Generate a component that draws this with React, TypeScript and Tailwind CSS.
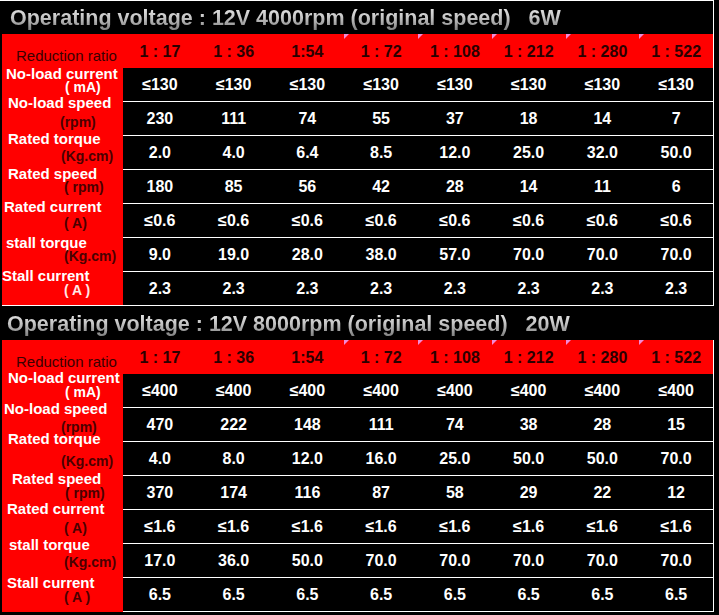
type Row = {
  label: string;
  labelCls: string;
  unit: string;
  unitCls: string;
  values: string[];
};

type Section = {
  title: string;
  first: boolean;
  rows: Row[];
};

const ratios = ["1 : 17", "1 : 36", "1:54", "1 : 72", "1 : 108", "1 : 212", "1 : 280", "1 : 522"];

const rep = (v: string) => Array.from({ length: 8 }, () => v);

const sections: Section[] = [
  {
    title: "Operating voltage : 12V 4000rpm (original speed)   6W",
    first: true,
    rows: [
      {
        label: "No-load current",
        labelCls: "ml-[4px] -mt-[2px]",
        unit: "( mA)",
        unitCls: "ml-[63px] -mt-[3px] text-white",
        values: rep("≤130"),
      },
      {
        label: "No-load speed",
        labelCls: "ml-[6px] -mt-[7px]",
        unit: "(rpm)",
        unitCls: "ml-[58px] mt-[3px] text-[#4a0000]",
        values: ["230", "111", "74", "55", "37", "18", "14", "7"],
      },
      {
        label: "Rated torque",
        labelCls: "ml-[6px] -mt-[5px]",
        unit: "(Kg.cm)",
        unitCls: "ml-[59px] mt-[1px] text-[#4a0000]",
        values: ["2.0", "4.0", "6.4", "8.5", "12.0", "25.0", "32.0", "50.0"],
      },
      {
        label: "Rated speed",
        labelCls: "ml-[6px] -mt-[4px]",
        unit: "( rpm)",
        unitCls: "ml-[62px] -mt-[3px] text-[#4a0000]",
        values: ["180", "85", "56", "42", "28", "14", "11", "6"],
      },
      {
        label: "Rated current",
        labelCls: "ml-[2px] -mt-[5px]",
        unit: "( A)",
        unitCls: "ml-[62px] mt-0 text-[#4a0000]",
        values: rep("≤0.6"),
      },
      {
        label: "stall torque",
        labelCls: "ml-[4px] -mt-[3px]",
        unit: "(Kg.cm)",
        unitCls: "ml-[62px] -mt-[3px] text-[#4a0000]",
        values: ["9.0", "19.0", "28.0", "38.0", "57.0", "70.0", "70.0", "70.0"],
      },
      {
        label: "Stall current",
        labelCls: "ml-0 -mt-[4px]",
        unit: "( A )",
        unitCls: "ml-[62px] -mt-[2px] text-[#ffe8e8]",
        values: rep("2.3"),
      },
    ],
  },
  {
    title: "Operating voltage : 12V 8000rpm (original speed)   20W",
    first: false,
    rows: [
      {
        label: "No-load current",
        labelCls: "ml-[6px] -mt-[4px]",
        unit: "( mA)",
        unitCls: "ml-[63px] -mt-[2px] text-white",
        values: rep("≤400"),
      },
      {
        label: "No-load speed",
        labelCls: "ml-[2px] -mt-[7px]",
        unit: "(rpm)",
        unitCls: "ml-[59px] mt-[2px] text-[#4a0000]",
        values: ["470", "222", "148", "111", "74", "38", "28", "15"],
      },
      {
        label: "Rated torque",
        labelCls: "ml-[6px] -mt-[11px]",
        unit: "(Kg.cm)",
        unitCls: "ml-[59px] mt-[6px] text-[#4a0000]",
        values: ["4.0", "8.0", "12.0", "16.0", "25.0", "50.0", "50.0", "70.0"],
      },
      {
        label: "Rated speed",
        labelCls: "ml-[10px] -mt-[5px]",
        unit: "( rpm)",
        unitCls: "ml-[63px] -mt-[2px] text-[#4a0000]",
        values: ["370", "174", "116", "87", "58", "29", "22", "12"],
      },
      {
        label: "Rated current",
        labelCls: "ml-[5px] -mt-[9px]",
        unit: "( A)",
        unitCls: "ml-[62px] mt-[3px] text-[#4a0000]",
        values: rep("≤1.6"),
      },
      {
        label: "stall torque",
        labelCls: "ml-[7px] -mt-[7px]",
        unit: "(Kg.cm)",
        unitCls: "ml-[62px] mt-[1px] text-[#4a0000]",
        values: ["17.0", "36.0", "50.0", "70.0", "70.0", "70.0", "70.0", "70.0"],
      },
      {
        label: "Stall current",
        labelCls: "ml-[5px] -mt-[3px]",
        unit: "( A )",
        unitCls: "ml-[62px] -mt-[2px] text-[#4a0000]",
        values: rep("6.5"),
      },
    ],
  },
];

function SpecTable({ section }: { section: Section }) {
  return (
    <div className="flex flex-col">
      <div
        className={
          section.first
            ? "flex h-[34px] items-center border-t border-r border-white pl-[10px]"
            : "flex h-[34px] items-center pl-[7px]"
        }
      >
        <span className="whitespace-pre bg-gradient-to-b from-[#f2f2f2] via-[#c4c4c4] to-[#7c7c7c] bg-clip-text pt-[1px] text-[21.5px] font-bold leading-[26px] text-transparent">
          {section.title}
        </span>
      </div>

      <div className="grid h-[34px] grid-cols-[121px_repeat(8,1fr)] border-r border-white pl-[2px]">
        <div className="bg-[#ff0000] pl-[14px] pt-[14px] text-[15px] leading-[16px] text-[#3a0000]">
          Reduction ratio
        </div>
        {ratios.map((r, i) => (
          <div
            key={r}
            className="relative flex items-center justify-center bg-[#ff0000] pt-[2px] text-[16px] font-bold text-[#2a0000]"
          >
            {i >= 3 && (
              <span className="absolute left-0 top-0 h-0 w-0 border-t-[5px] border-r-[5px] border-t-[#f28ad6] border-r-transparent" />
            )}
            {r}
          </div>
        ))}
      </div>

      {section.rows.map((row, ri) => (
        <div
          key={row.label + ri}
          className="grid h-[34px] grid-cols-[121px_repeat(8,1fr)] border-r border-white pl-[2px]"
        >
          <div
            className={
              section.first && ri === section.rows.length - 1
                ? "flex flex-col border-b border-white bg-[#ff0000] font-bold"
                : "flex flex-col bg-[#ff0000] font-bold"
            }
          >
            <span className={`whitespace-pre text-[15px] leading-[16px] text-white ${row.labelCls}`}>
              {row.label}
            </span>
            <span className={`whitespace-pre text-[14px] leading-[16px] ${row.unitCls}`}>
              {row.unit}
            </span>
          </div>
          {row.values.map((v, i) => (
            <div
              key={i}
              className="flex items-center justify-center border-b border-white text-[16px] font-bold text-white"
            >
              {v}
            </div>
          ))}
        </div>
      ))}
    </div>
  );
}

export default function App() {
  return (
    <div className="h-[615px] w-[719px] overflow-hidden bg-black font-['Liberation_Sans',Arial,sans-serif]">
      <div className="flex w-[714px] flex-col">
        {sections.map((s) => (
          <SpecTable key={s.title} section={s} />
        ))}
      </div>
    </div>
  );
}
